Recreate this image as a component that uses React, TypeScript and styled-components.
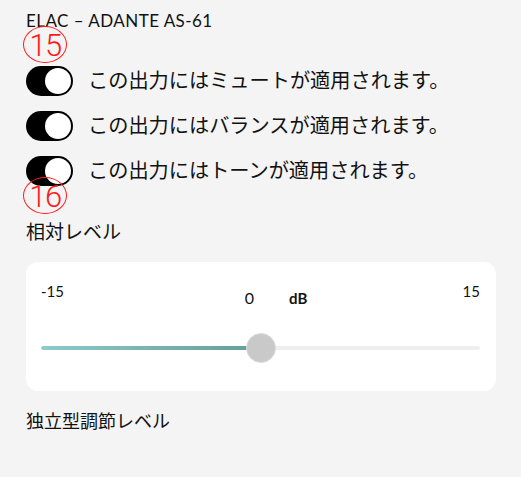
import React, { useState } from "react";
import styled, { createGlobalStyle } from "styled-components";

const GlobalStyle = createGlobalStyle`
  body {
    margin: 0;
    background: #f4f4f4;
    font-family: Lato, "Noto Sans CJK JP", sans-serif;
    color: #111;
  }
`;

const rows = [
  { id: "mute", label: "この出力にはミュートが適用されます。" },
  { id: "balance", label: "この出力にはバランスが適用されます。" },
  { id: "tone", label: "この出力にはトーンが適用されます。" },
];

const App = () => {
  const [on, setOn] = useState<Record<string, boolean>>({ mute: true, balance: true, tone: true });
  const level = 0;
  const pct = ((level + 15) / 30) * 100;

  return (
    <Page>
      <GlobalStyle />
      <Title>ELAC – ADANTE AS-61</Title>

      <ToggleList>
        {rows.map((r) => (
          <ToggleRow key={r.id}>
            <Switch $on={on[r.id]} onClick={() => setOn({ ...on, [r.id]: !on[r.id] })}>
              <Knob />
            </Switch>
            <RowText>{r.label}</RowText>
          </ToggleRow>
        ))}
      </ToggleList>

      <SectionLabel>相対レベル</SectionLabel>
      <Card>
        <Scale>
          <ScaleEnd>-15</ScaleEnd>
          <Current>
            <span>0</span>
            <Unit>dB</Unit>
          </Current>
          <ScaleEnd $right>15</ScaleEnd>
        </Scale>
        <Slider>
          <Track>
            <Fill style={{ width: `${pct}%` }} />
          </Track>
          <Thumb style={{ left: `${pct}%` }} />
        </Slider>
      </Card>

      <SubLabel>独立型調節レベル</SubLabel>

      {/* annotation marks */}
      <Mark $top={26} $left={23}>15</Mark>
      <Mark $top={177} $left={23}>16</Mark>
    </Page>
  );
};

const Page = styled.div`
  position: relative;
  padding: 0 25px 0 26px;
  min-height: 477px;
  box-sizing: border-box;
  overflow: hidden;
`;

const Title = styled.div`
  padding-top: 11px;
  font-size: 17px;
  line-height: 20px;
  letter-spacing: 0.45px;
  color: #111;
`;

const ToggleList = styled.div`
  margin-top: 27px;
  display: flex;
  flex-direction: column;
`;

const ToggleRow = styled.div`
  height: 45px;
  display: flex;
  align-items: center;
  gap: 15px;
`;

const Switch = styled.div<{ $on?: boolean }>`
  position: relative;
  width: 47px;
  height: 30px;
  border-radius: 15px;
  background: ${(p) => (p.$on ? "#000" : "#bbb")};
  display: flex;
  align-items: center;
  justify-content: ${(p) => (p.$on ? "flex-end" : "flex-start")};
  padding: 0 2px;
  box-sizing: border-box;
  cursor: pointer;
  flex-shrink: 0;
`;

const Knob = styled.div`
  width: 26px;
  height: 26px;
  border-radius: 50%;
  background: #fff;
`;

const RowText = styled.span`
  font-family: "Noto Sans CJK JP", sans-serif;
  font-size: 20.2px;
  line-height: 1;
  color: #111;
`;

const SectionLabel = styled.div`
  margin-top: 28px;
  font-family: "Noto Sans CJK JP", sans-serif;
  font-size: 19px;
  line-height: 19px;
`;

const Card = styled.div`
  margin-top: 22px;
  width: 470px;
  background: #fff;
  border-radius: 12px;
  padding: 22px 16px 28px 15px;
  box-sizing: border-box;
`;

const Scale = styled.div`
  display: grid;
  grid-template-columns: 1fr auto 1fr;
  align-items: start;
`;

const ScaleEnd = styled.span<{ $right?: boolean }>`
  font-size: 15px;
  line-height: 15px;
  text-align: ${(p) => (p.$right ? "right" : "left")};
`;

const Current = styled.div`
  margin-top: 6px;
  padding-left: 31px;
  display: flex;
  gap: 35px;
  font-size: 16px;
  line-height: 16px;
`;

const Unit = styled.span`
  font-weight: 700;
  font-size: 15px;
`;

const Slider = styled.div`
  position: relative;
  margin-top: 27px;
  height: 30px;
  display: flex;
  align-items: center;
`;

const Track = styled.div`
  width: 100%;
  height: 4px;
  border-radius: 2px;
  background: #efefef;
  overflow: hidden;
`;

const Fill = styled.div`
  height: 100%;
  border-radius: 2px;
  background: linear-gradient(90deg, #8dcaca, #659c98);
`;

const Thumb = styled.div`
  position: absolute;
  top: 50%;
  width: 30px;
  height: 30px;
  border-radius: 50%;
  background: #c9c9c9;
  border: 1px solid #dcdcdc;
  box-sizing: border-box;
  transform: translate(-50%, -50%);
`;

const SubLabel = styled.div`
  margin-top: 20px;
  font-family: "Noto Sans CJK JP", sans-serif;
  font-size: 18px;
  line-height: 18px;
`;

const Mark = styled.span<{ $top: number; $left: number }>`
  position: absolute;
  top: ${(p) => p.$top}px;
  left: ${(p) => p.$left}px;
  width: 44px;
  height: 37px;
  padding-top: 1px;
  border: 1.3px solid #ff1a1a;
  border-radius: 50%;
  box-sizing: border-box;
  display: flex;
  align-items: center;
  justify-content: center;
  font-family: Roboto, sans-serif;
  font-weight: 300;
  font-size: 31px;
  letter-spacing: -1.5px;
  line-height: 1;
  color: #ff1a1a;
  pointer-events: none;
`;

export default App;
